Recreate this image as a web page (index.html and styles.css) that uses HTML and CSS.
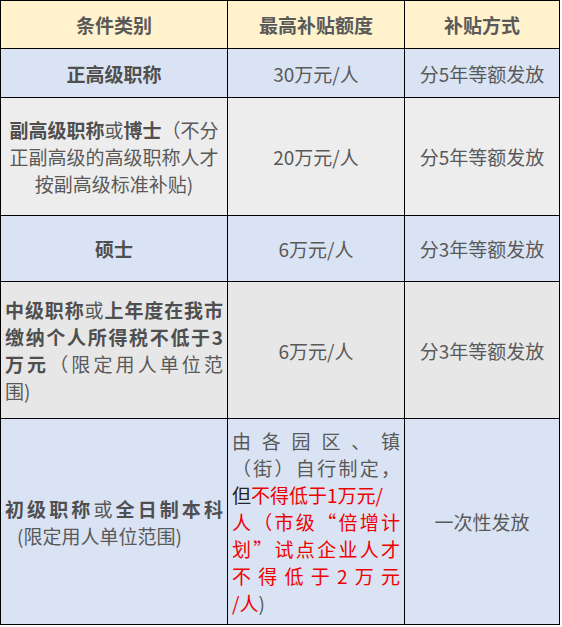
FILE: index.html
```html
<!DOCTYPE html>
<html lang="zh-CN">
<head>
<meta charset="utf-8">
<title>人才补贴</title>
<link rel="stylesheet" href="styles.css">
</head>
<body>
<table class="grid">
  <colgroup>
    <col class="c1">
    <col class="c2">
    <col class="c3">
  </colgroup>
  <tr class="r-head">
    <th>条件类别</th>
    <th>最高补贴额度</th>
    <th>补贴方式</th>
  </tr>
  <tr class="r1 blue">
    <td class="center"><b>正高级职称</b></td>
    <td class="center">30万元/人</td>
    <td class="center">分5年等额发放</td>
  </tr>
  <tr class="r2 grey1">
    <td class="center lh2"><b>副高级职称</b>或<b>博士</b>（不分<br>正副高级的高级职称人才<br>按副高级标准补贴)</td>
    <td class="center">20万元/人</td>
    <td class="center">分5年等额发放</td>
  </tr>
  <tr class="r3 blue">
    <td class="center"><b>硕士</b></td>
    <td class="center">6万元/人</td>
    <td class="center">分3年等额发放</td>
  </tr>
  <tr class="r4 grey2">
    <td class="lh4">
      <span class="jl"><b>中级职称</b>或<b>上年度在我市</b></span>
      <span class="jl"><b>缴纳个人所得税不低于3</b></span>
      <span class="jl"><b>万元</b>（限定用人单位范</span>
      <span class="ln">围)</span>
    </td>
    <td class="center">6万元/人</td>
    <td class="center">分3年等额发放</td>
  </tr>
  <tr class="r5 blue">
    <td>
      <span class="jl"><b>初级职称</b>或<b>全日制本科</b></span>
      <span class="ln sub">(限定用人单位范围)</span>
    </td>
    <td class="lh5">
      <span class="jl">由各园区、镇</span>
      <span class="jl">（街）自行制定，</span>
      <span class="ln"><span class="dark">但</span><span class="red">不得低于1万元/</span></span>
      <span class="jl red">人（市级“倍增计</span>
      <span class="jl red">划”试点企业人才</span>
      <span class="jl red">不得低于2万元</span>
      <span class="ln"><span class="red">/人</span>)</span>
    </td>
    <td class="center">一次性发放</td>
  </tr>
</table>
</body>
</html>
```

FILE: styles.css
```css
html, body {
  margin: 0;
  padding: 0;
  background: #ffffff;
}

body {
  font-family: "Noto Sans CJK SC", "Noto Sans", sans-serif;
  font-size: 19px;
  color: #595959;
}

.grid {
  border-collapse: collapse;
  table-layout: fixed;
  width: 559px;
}

.c1 { width: 227px; }
.c2 { width: 177px; }
.c3 { width: 155px; }

.grid th,
.grid td {
  border: 1px solid #000000;
  padding: 0 4px;
  vertical-align: middle;
  line-height: 27px;
  overflow: hidden;
}

.grid th {
  background: #fff2cc;
  font-weight: 700;
  text-align: center;
  color: #595959;
}

.r-head { height: 48px; }
.r1 { height: 49px; }
.r2 { height: 118px; }
.r3 { height: 66px; }
.r4 { height: 137px; }
.r5 { height: 206px; }

.blue td { background: #dae3f3; }
.grey1 td { background: #ededed; }
.grey2 td { background: #e7e7e7; }

.center { text-align: center; }

b { font-weight: 700; color: #4f4f4f; }

.lh2 { line-height: 26.7px; }
.lh4 { line-height: 28.3px; }
.lh5 { line-height: 27.5px; }

.jl {
  display: block;
  text-align: justify;
  text-align-last: justify;
}

.ln {
  display: block;
  text-align: left;
}

.sub { padding-left: 12px; }

.red { color: #f00000; }
.dark { color: #262626; }
```
